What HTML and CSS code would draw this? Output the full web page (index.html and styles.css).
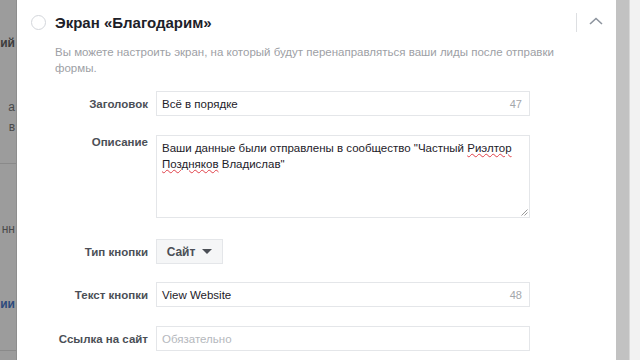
FILE: index.html
```html
<!DOCTYPE html>
<html lang="ru">
<head>
    <meta charset="UTF-8">
    <meta name="viewport" content="width=device-width, initial-scale=1.0">
    <title>Экран «Благодарим»</title>
    <link rel="stylesheet" href="styles.css">
</head>
<body>
    <div class="page">
        <div class="side">
            <div class="side-text t1">ий</div>
            <div class="side-text t2">а</div>
            <div class="side-text t3">в</div>
            <div class="side-line l1"></div>
            <div class="side-text t4">нн</div>
            <div class="side-text t5 link">ии</div>
            <div class="side-line l2"></div>
        </div>
        <div class="panel">
            <div class="panel-head">
                <span class="radio"></span>
                <h2 class="title">Экран «Благодарим»</h2>
                <span class="sep"></span>
                <svg class="chevron" width="14" height="8" viewBox="0 0 14 8">
                    <path d="M1 7 L7 1.5 L13 7" fill="none" stroke="#8d949e" stroke-width="1.6"/>
                </svg>
            </div>
            <p class="desc">Вы можете настроить экран, на который будут перенаправляться ваши лиды после отправки формы.</p>
            <div class="form">
                <div class="row">
                    <label class="label">Заголовок</label>
                    <div class="field">
                        <span class="value">Всё в порядке</span>
                        <span class="count">47</span>
                    </div>
                </div>
                <div class="row top">
                    <label class="label">Описание</label>
                    <div class="field area">
                        <span class="value">Ваши данные были отправлены в сообщество "Частный <u class="spell">Риэлтор</u><br><u class="spell">Поздняков</u> Владислав"</span>
                        <svg class="grip" width="7" height="7" viewBox="0 0 7 7">
                            <path d="M0.5 6.5 L6.5 0.5 M3.5 6.5 L6.5 3.5" stroke="#999" stroke-width="1"/>
                        </svg>
                    </div>
                </div>
                <div class="row btn-row">
                    <label class="label">Тип кнопки</label>
                    <button class="select">Сайт <span class="caret"></span></button>
                </div>
                <div class="row after-btn">
                    <label class="label">Текст кнопки</label>
                    <div class="field">
                        <span class="value">View Website</span>
                        <span class="count">48</span>
                    </div>
                </div>
                <div class="row">
                    <label class="label">Ссылка на сайт</label>
                    <div class="field">
                        <span class="value placeholder">Обязательно</span>
                    </div>
                </div>
            </div>
        </div>
        <div class="scrollbar"></div>
        <div class="edge"></div>
    </div>
</body>
</html>
```

FILE: styles.css
```css
body {
    margin: 0;
    font-family: "Liberation Sans", Arial, sans-serif;
    background: #f2f2f2;
    color: #1d2129;
}
.page {
    display: flex;
    height: 360px;
    overflow: hidden;
}
.side {
    width: 17px;
    flex: none;
    background: #9c9c9c;
    position: relative;
    overflow: hidden;
    border-right: 1px solid #8e8e8e;
    box-sizing: border-box;
}
.side-text {
    position: absolute;
    right: 1px;
    font-size: 12px;
    font-weight: bold;
    color: #3c3c3c;
    white-space: nowrap;
}
.side-text.link {
    color: #2c4a7c;
}
.t1 { top: 36px; }
.t2 { top: 100px; font-weight: normal; color: #4a4a4a; }
.t3 { top: 120px; font-weight: normal; color: #4a4a4a; }
.t4 { top: 222px; font-weight: normal; color: #4a4a4a; }
.t5 { top: 297px; }
.side-line {
    position: absolute;
    left: 0;
    right: 0;
    height: 1px;
    background: #8a8a8a;
}
.l1 { top: 163px; }
.l2 { top: 350px; }
.panel {
    width: 599px;
    flex: none;
    background: #fff;
    padding: 0 0 0 14px;
    box-sizing: border-box;
}
.panel-head {
    display: flex;
    align-items: center;
    height: 44px;
}
.radio {
    width: 13px;
    height: 13px;
    border: 1px solid #d3d6db;
    border-radius: 50%;
    flex: none;
}
.title {
    margin: 0 0 0 9px;
    font-size: 15px;
    font-weight: bold;
    color: #1d2129;
    flex: 1;
}
.sep {
    width: 1px;
    height: 19px;
    background: #dddfe2;
    margin-right: 12px;
}
.chevron {
    margin-right: 13px;
    margin-top: -2px;
}
.desc {
    margin: 0 0 15px 24px;
    width: 510px;
    font-size: 11.5px;
    line-height: 16px;
    color: #9da0a5;
}
.form {
    display: flex;
    flex-direction: column;
    gap: 19px;
}
.row {
    display: flex;
    align-items: center;
}
.row.top {
    align-items: flex-start;
}
.btn-row {
    margin-top: 2px;
}
.after-btn {
    margin-top: -1px;
}
.label {
    width: 117px;
    flex: none;
    text-align: right;
    font-size: 11.5px;
    font-weight: bold;
    color: #4b4f56;
    margin-right: 8px;
}
.row.top .label {
    padding-top: 1px;
}
.field {
    width: 374px;
    height: 25px;
    box-sizing: border-box;
    border: 1px solid #e4e6e9;
    display: flex;
    align-items: center;
    padding: 0 7px 0 5px;
    font-size: 11.5px;
}
.field.area {
    height: 83px;
    align-items: flex-start;
    padding-top: 4px;
    line-height: 16px;
    position: relative;
}
.value {
    flex: 1;
    color: #1d2129;
}
.placeholder {
    color: #b5b8bd;
}
.spell {
    text-decoration: underline wavy #e0414a;
    text-decoration-thickness: 1px;
}
.count {
    font-size: 11px;
    color: #a4a7ab;
}
.grip {
    position: absolute;
    right: 1px;
    bottom: 1px;
}
.select {
    height: 25px;
    width: 67px;
    border: 1px solid #e4e6e9;
    background: #f5f6f7;
    font-family: inherit;
    font-size: 12px;
    font-weight: bold;
    color: #4b4f56;
    padding: 0;
    display: flex;
    align-items: center;
    justify-content: center;
    gap: 7px;
}
.caret {
    width: 0;
    height: 0;
    border-left: 5px solid transparent;
    border-right: 5px solid transparent;
    border-top: 5px solid #4b4f56;
}
.scrollbar {
    width: 13px;
    flex: none;
    background: #c2c2c2;
    border-right: 1px solid #d8d8d8;
}
.edge {
    flex: 1;
    background: #f2f2f2;
}
```
